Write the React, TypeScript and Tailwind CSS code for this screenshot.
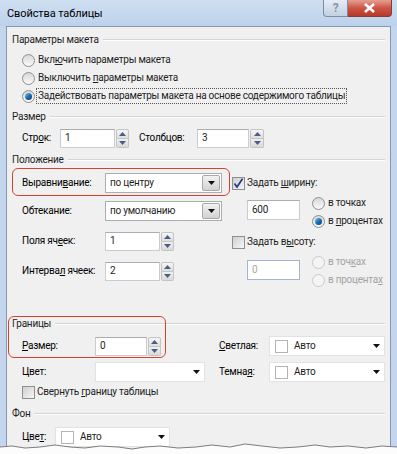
import React from 'react';

function Header({ title }: { title: string }) {
    return (
        <div className="flex items-center h-[16px]">
            <span className="text-[#1e1e1e] leading-none">{title}</span>
            <div className="flex-1 ml-[4px] border-t border-[#d5d5d5] border-b-white border-b" />
        </div>
    );
}

function Radio({ label, checked, disabled, focus }: { label: React.ReactNode; checked?: boolean; disabled?: boolean; focus?: boolean }) {
    return (
        <div className="flex items-center h-[18px]">
            <div
                className={`w-[13px] h-[13px] rounded-full border flex items-center justify-center shrink-0 ${disabled ? 'border-[#c9c9c9] bg-[#f4f4f4]' : 'border-[#8e8f8f] bg-gradient-to-b from-[#d8d8d8] to-[#fafafa]'}`}
            >
                {checked && <div className="w-[7px] h-[7px] rounded-full bg-gradient-to-br from-[#7ac3f0] via-[#1d6fb5] to-[#0b3b6e]" />}
            </div>
            <span
                className={`ml-[1px] leading-none px-[1px] py-[2px] ${focus ? 'border border-dotted border-[#555]' : 'border border-transparent'} ${disabled ? 'text-[#a3a3a3]' : 'text-[#1e1e1e]'}`}
            >
                {label}
            </span>
        </div>
    );
}

function Checkbox({ label, checked }: { label: React.ReactNode; checked?: boolean }) {
    return (
        <div className="flex items-center h-[16px]">
            <div className="w-[13px] h-[13px] border border-[#8e8f8f] bg-gradient-to-br from-[#cfcfcf] to-[#f6f6f6] flex items-center justify-center shrink-0">
                {checked && (
                    <svg width="11" height="11" viewBox="0 0 11 11">
                        <path d="M1.5 5.5 L4 9 L9.5 0.8" fill="none" stroke="#233d8c" strokeWidth="1.8" />
                    </svg>
                )}
            </div>
            <span className="ml-[2px] leading-none text-[#1e1e1e]">{label}</span>
        </div>
    );
}

function Spinner({ w = 13 }: { w?: number }) {
    return (
        <div className={`flex flex-col h-[19px] ml-[1px] shrink-0 ${w === 14 ? 'w-[14px]' : 'w-[13px]'}`}>
            <div className="flex-1 border border-[#c4c4c4] rounded-t-[2px] bg-gradient-to-b from-[#f6f6f6] to-[#dedede] flex items-center justify-center">
                <svg width="7" height="4" viewBox="0 0 7 4">
                    <path d="M0 4 L3.5 0 L7 4 Z" fill="#4b5d86" />
                </svg>
            </div>
            <div className="flex-1 border border-t-0 border-[#c4c4c4] rounded-b-[2px] bg-gradient-to-b from-[#f0f0f0] to-[#d9d9d9] flex items-center justify-center">
                <svg width="7" height="4" viewBox="0 0 7 4">
                    <path d="M0 0 L3.5 4 L7 0 Z" fill="#4b5d86" />
                </svg>
            </div>
        </div>
    );
}

function TextBox({ value, className, disabled }: { value: string; className: string; disabled?: boolean }) {
    return (
        <div
            className={`h-[19px] shrink-0 border bg-white flex items-center pl-[4px] leading-none ${disabled ? 'border-[#a4b5d2] text-[#a8a8a8]' : 'border-[#c9ccd3] border-t-[#abadb3] text-[#1e1e1e]'} ${className}`}
        >
            {value}
        </div>
    );
}

function Arrow() {
    return (
        <svg width="7" height="4" viewBox="0 0 7 4">
            <path d="M0 0 L7 0 L3.5 4 Z" fill="#111" />
        </svg>
    );
}

function Combo({ value, className }: { value: string; className: string }) {
    return (
        <div className={`h-[20px] shrink-0 border border-[#abadb3] bg-white flex items-center ${className}`}>
            <span className="flex-1 pl-[4px] leading-none text-[#1e1e1e]">{value}</span>
            <div className="w-[18px] h-[16px] mr-[1px] border border-[#a9a9a9] rounded-[2px] bg-gradient-to-b from-[#f2f2f2] to-[#d2d2d2] flex items-center justify-center">
                <Arrow />
            </div>
        </div>
    );
}

function SwatchCombo({ text, className }: { text?: string; className: string }) {
    return (
        <div className={`h-[20px] shrink-0 border border-[#e0e2e8] bg-white flex items-center ${className}`}>
            {text ? (
                <>
                    <div className="ml-[5px] w-[13px] h-[13px] border border-[#b4b4b4] bg-white" />
                    <span className="ml-[6px] flex-1 leading-none text-[#1e1e1e]">{text}</span>
                </>
            ) : (
                <span className="flex-1" />
            )}
            <div className="w-[16px] flex items-center justify-center">
                <Arrow />
            </div>
        </div>
    );
}

function Row({ children, className = '' }: { children: React.ReactNode; className?: string }) {
    return <div className={`flex items-center h-[20px] ${className}`}>{children}</div>;
}

function TitleBar() {
    return (
        <div className="h-[26px] flex items-start bg-gradient-to-b from-[#cfdff1] to-[#bcd1ec]">
            <span className="ml-[7px] mt-[8px] text-[11px] tracking-[-0.1px] leading-none text-black">Свойства таблицы</span>
            <div className="flex-1" />
            <div className="w-[25px] h-[17px] border border-[#7c8ca5] border-t-0 rounded-bl-[4px] bg-gradient-to-b from-[#e4ecf6] to-[#c3d1e3] flex items-center justify-center text-[12px] font-bold text-[#8a95a5] leading-none">
                ?
            </div>
            <div className="w-[44px] h-[17px] mr-[5px] border border-[#8a3b35] border-t-0 border-l-0 rounded-br-[4px] bg-gradient-to-b from-[#e59f92] via-[#cc5446] to-[#b8382a] flex items-center justify-center">
                <svg width="11" height="10" viewBox="0 0 11 10">
                    <path d="M1 1 L10 9 M10 1 L1 9" stroke="white" strokeWidth="2.6" />
                </svg>
            </div>
        </div>
    );
}

function Tear() {
    const pts = [0, 5, 12, 4, 25, 6, 40, 5, 55, 3, 70, 5, 85, 6, 100, 4, 118, 5, 132, 7, 145, 5, 160, 4, 178, 6, 196, 5, 212, 3, 230, 5, 245, 2, 262, 4, 280, 6, 298, 5, 315, 3, 330, 5, 348, 4, 366, 6, 382, 4, 397, 5];
    let d = '';
    for (let i = 0; i < pts.length; i += 2) d += `${i === 0 ? 'M' : 'L'}${pts[i]} ${pts[i + 1]} `;
    return (
        <svg className="absolute left-0 bottom-0" width="397" height="12" viewBox="0 0 397 12">
            <path d={`${d} L397 12 L0 12 Z`} fill="#fcfcfc" />
            <path d={d} fill="none" stroke="#7d7d7d" strokeWidth="1" />
        </svg>
    );
}

export default function App() {
    return (
        <div className="w-[397px] h-[454px] relative overflow-hidden whitespace-nowrap bg-[#c3d6ee] font-['Roboto',sans-serif] text-[10px] tracking-[-0.25px]">
            <TitleBar />
            <div className="relative mx-[6px] h-[440px] border border-[#8797ae] bg-[#f0f0f0] px-[5px]">
                <div className="mt-[5px]">
                    <Header title="Параметры макета" />
                </div>
                <div className="mt-[3px] ml-[10px]">
                    <Radio label={<>Вкл<u>ю</u>чить параметры макета</>} />
                    <Radio label={<>Выключить <u>п</u>араметры макета</>} />
                    <Radio checked focus label="Задействовать параметры макета на основе содержимого таблицы" />
                </div>
                <div className="mt-[4px]">
                    <Header title="Размер" />
                </div>
                <Row className="mt-[3px] ml-[10px]">
                    <span className="w-[38px] leading-none">Стр<u>о</u>к:</span>
                    <TextBox value="1" className="w-[55px]" />
                    <Spinner />
                    <span className="ml-[10px] w-[58px] leading-none">Столбцов:</span>
                    <TextBox value="3" className="w-[52px]" />
                    <Spinner w={14} />
                </Row>
                <div className="mt-[4px]">
                    <Header title="Положение" />
                </div>
                <div className="flex">
                    <div className="w-[218px] shrink-0">
                        <Row className="mt-[5px] ml-[10px]">
                            <span className="w-[83px] leading-none">Выравни<u>в</u>ание:</span>
                            <Combo value="по центру" className="w-[117px]" />
                        </Row>
                        <Row className="mt-[8px] ml-[10px]">
                            <span className="w-[83px] leading-none">Обтекание:</span>
                            <Combo value="по умолчанию" className="w-[117px]" />
                        </Row>
                        <Row className="mt-[10px] ml-[10px]">
                            <span className="w-[83px] leading-none">Поля яч<u>е</u>ек:</span>
                            <TextBox value="1" className="w-[55px]" />
                            <Spinner />
                        </Row>
                        <Row className="mt-[10px] ml-[10px]">
                            <span className="w-[83px] leading-none">Интерва<u>л</u> ячеек:</span>
                            <TextBox value="2" className="w-[55px]" />
                            <Spinner />
                        </Row>
                    </div>
                    <div className="ml-[2px] flex-1">
                        <div className="mt-[7px]">
                            <Checkbox checked label={<>Задать <u>ш</u>ирину:</>} />
                        </div>
                        <div className="mt-[3px] flex">
                            <TextBox value="600" className="ml-[15px] mt-[6px] w-[53px] h-[20px]" />
                            <div className="ml-[12px]">
                                <Radio label="в точках" />
                                <Radio checked label={<>в <u>п</u>роцентах</>} />
                            </div>
                        </div>
                        <div className="mt-[4px]">
                            <Checkbox label={<>Задать в<u>ы</u>соту:</>} />
                        </div>
                        <div className="mt-[3px] flex">
                            <TextBox disabled value="0" className="ml-[15px] mt-[7px] w-[53px] h-[20px]" />
                            <div className="ml-[12px]">
                                <Radio disabled label={<>в точ<u>к</u>ах</>} />
                                <Radio disabled label={<>в процента<u>х</u></>} />
                            </div>
                        </div>
                    </div>
                </div>
                <div className="mt-[27px]">
                    <Header title="Границы" />
                </div>
                <Row className="mt-[4px]">
                    <div className="w-[207px] shrink-0 flex items-center pl-[10px]">
                        <span className="w-[73px] leading-none"><u>Р</u>азмер:</span>
                        <TextBox value="0" className="w-[52px]" />
                        <Spinner />
                    </div>
                    <span className="w-[50px] leading-none"><u>С</u>ветлая:</span>
                    <SwatchCombo text="Авто" className="w-[116px]" />
                </Row>
                <Row className="mt-[6px]">
                    <div className="w-[207px] shrink-0 flex items-center pl-[10px]">
                        <span className="w-[73px] leading-none">Цвет:</span>
                        <SwatchCombo className="w-[110px]" />
                    </div>
                    <span className="w-[50px] leading-none">Темна<u>я</u>:</span>
                    <SwatchCombo text="Авто" className="w-[116px]" />
                </Row>
                <div className="mt-[2px] ml-[10px]">
                    <Checkbox label={<>Свернуть <u>г</u>раницу таблицы</>} />
                </div>
                <div className="mt-[6px]">
                    <Header title="Фон" />
                </div>
                <Row className="mt-[5px] ml-[10px]">
                    <span className="w-[33px] leading-none">Цве<u>т</u>:</span>
                    <SwatchCombo text="Авто" className="w-[115px]" />
                </Row>

                <div className="absolute left-[5px] top-[141px] w-[218px] h-[28px] border-[1.5px] border-[#d9412f] rounded-[6px] pointer-events-none" />
                <div className="absolute left-[1px] top-[289px] w-[158px] h-[42px] border-[1.5px] border-[#d9412f] rounded-[6px] pointer-events-none" />
            </div>
            <Tear />
        </div>
    );
}
